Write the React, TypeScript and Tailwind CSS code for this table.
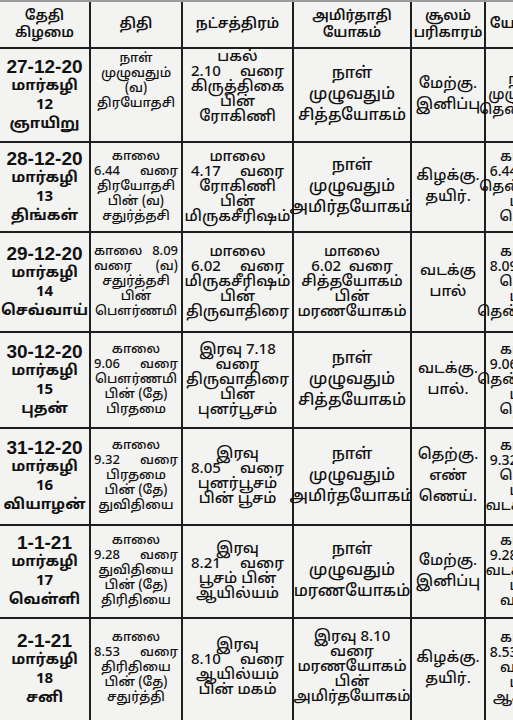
import React from "react";

const font = {
  fontFamily:
    '"Noto Sans Tamil", "Latha", "Lohit Tamil", "Noto Sans", "Liberation Sans", sans-serif',
};

const header: string[][] = [
  ["தேதி", "கிழமை"],
  ["திதி"],
  ["நட்சத்திரம்"],
  ["அமிர்தாதி", "யோகம்"],
  ["சூலம்", "பரிகாரம்"],
  ["யோகினி"],
];

const rows: string[][][] = [
  [
    ["27-12-20", "மார்கழி", "12", "ஞாயிறு"],
    ["நாள்", "முழுவதும்", "(வ)", "திரயோதசி"],
    ["பகல்", "2.10~வரை", "கிருத்திகை", "பின்", "ரோகிணி"],
    ["நாள்", "முழுவதும்", "சித்தயோகம்"],
    ["மேற்கு.", "இனிப்பு"],
    ["நாள்", "முழுவதும்", "தென்மேற்கு"],
  ],
  [
    ["28-12-20", "மார்கழி", "13", "திங்கள்"],
    ["காலை", "6.44~வரை", "திரயோதசி", "பின் (வ)", "சதுர்த்தசி"],
    ["மாலை", "4.17~வரை", "ரோகிணி", "பின்", "மிருகசீரிஷம்"],
    ["நாள்", "முழுவதும்", "அமிர்தயோகம்"],
    ["கிழக்கு.", "தயிர்."],
    ["காலை", "6.44 வரை", "தென்மேற்கு", "பின்", "தெற்கு"],
  ],
  [
    ["29-12-20", "மார்கழி", "14", "செவ்வாய்"],
    ["காலை~8.09", "வரை~(வ)", "சதுர்த்தசி", "பின்", "பௌர்ணமி"],
    ["மாலை", "6.02~வரை", "மிருகசீரிஷம்", "பின்", "திருவாதிரை"],
    ["மாலை", "6.02  வரை", "சித்தயோகம்", "பின்", "மரணயோகம்"],
    ["வடக்கு", "பால்"],
    ["காலை", "8.09 வரை", "தெற்கு", "பின்", "தென்கிழக்கு"],
  ],
  [
    ["30-12-20", "மார்கழி", "15", "புதன்"],
    ["காலை", "9.06~வரை", "பௌர்ணமி", "பின் (தே)", "பிரதமை"],
    ["இரவு 7.18", "வரை", "திருவாதிரை", "பின்", "புனர்பூசம்"],
    ["நாள்", "முழுவதும்", "சித்தயோகம்"],
    ["வடக்கு.", "பால்."],
    ["காலை", "9.06 வரை", "தென்கிழக்கு", "பின்", "தெற்கு"],
  ],
  [
    ["31-12-20", "மார்கழி", "16", "வியாழன்"],
    ["காலை", "9.32~வரை", "பிரதமை", "பின் (தே)", "துவிதியை"],
    ["இரவு", "8.05~வரை", "புனர்பூசம்", "பின் பூசம்"],
    ["நாள்", "முழுவதும்", "அமிர்தயோகம்"],
    ["தெற்கு.", "எண்", "ணெய்."],
    ["காலை", "9.32 வரை", "தெற்கு", "பின்", "வடகிழக்கு"],
  ],
  [
    ["1-1-21", "மார்கழி", "17", "வெள்ளி"],
    ["காலை", "9.28~வரை", "துவிதியை", "பின் (தே)", "திரிதியை"],
    ["இரவு", "8.21~வரை", "பூசம் பின்", "ஆயில்யம்"],
    ["நாள்", "முழுவதும்", "மரணயோகம்"],
    ["மேற்கு.", "இனிப்பு"],
    ["காலை", "9.28 வரை", "வடகிழக்கு", "பின்", "வடக்கு"],
  ],
  [
    ["2-1-21", "மார்கழி", "18", "சனி"],
    ["காலை", "8.53~வரை", "திரிதியை", "பின் (தே)", "சதுர்த்தி"],
    ["இரவு", "8.10~வரை", "ஆயில்யம்", "பின் மகம்"],
    ["இரவு 8.10", "வரை", "மரணயோகம்", "பின்", "அமிர்தயோகம்"],
    ["கிழக்கு.", "தயிர்."],
    ["காலை", "8.53 வரை", "வடக்கு", "பின்", "ஆகாயம்"],
  ],
];

function colClass(ci: number, n: number): string {
  switch (ci) {
    case 0:
      return "text-[15px] leading-[19px] font-bold";
    case 1:
      return "text-[13px] leading-[15px] px-[3px] font-medium";
    case 2:
      return "text-[15px] leading-[15px] px-[8px] font-medium";
    case 3:
      return n > 3
        ? "text-[15px] leading-[15px] px-[6px] font-medium"
        : "text-[16px] leading-[21px] px-[6px] font-medium";
    case 4:
      return "text-[15px] leading-[21px] font-medium";
    default:
      return "text-[14px] leading-[15px] font-medium";
  }
}

const rowH = [
  "h-[92px]",
  "h-[88px]",
  "h-[98px]",
  "h-[94px]",
  "h-[95px]",
  "h-[91px]",
  "h-[110px]",
];

const extra: Record<string, string> = {
  "0-1": "pb-[26px]",
  "0-2": "pb-[16px]",
  "6-0": "pb-[10px]",
  "6-1": "pb-[12px]",
  "6-2": "pb-[12px]",
  "6-3": "pb-[14px]",
  "6-4": "pb-[10px]",
  "6-5": "pb-[12px]",
};

function Line({ t, date }: { t: string; date?: boolean }) {
  if (date) {
    return (
      <div
        className="whitespace-nowrap text-[19px] leading-[20px] font-bold"
        style={{ fontFamily: '"Liberation Sans", Arial, sans-serif' }}
      >
        {t}
      </div>
    );
  }
  if (t.includes("~")) {
    const [a, b] = t.split("~");
    return (
      <div className="flex justify-between w-full">
        <span>{a}</span>
        <span>{b}</span>
      </div>
    );
  }
  return <div className="whitespace-pre">{t}</div>;
}

export default function App() {
  return (
    <div
      className="w-[513px] h-[720px] overflow-hidden bg-[#f3f3f1] text-[#111111]"
      style={font}
    >
      <div className="w-[566px] bg-[#9a9a9a] pt-[2px]">
        <div className="grid grid-cols-[89px_90px_109px_116px_72px_80px] gap-[2px] bg-[#1e1e1e]">
          {header.map((h, i) => (
            <div
              key={"h" + i}
              className="h-[45px] bg-[#f3f3f1] flex flex-col items-center justify-center text-[14px] leading-[17px] font-semibold"
            >
              {h.map((l, j) => (
                <div key={j} className="whitespace-nowrap">
                  {l}
                </div>
              ))}
            </div>
          ))}
          {rows.map((r, ri) =>
            r.map((c, ci) => (
              <div
                key={ri + "-" + ci}
                className={
                  "bg-[#f3f3f1] flex flex-col items-center justify-center text-center " +
                  rowH[ri] +
                  " " +
                  colClass(ci, c.length) +
                  " " +
                  (extra[ri + "-" + ci] || "")
                }
              >
                {c.map((l, j) => (
                  <Line key={j} t={l} date={ci === 0 && j === 0} />
                ))}
              </div>
            ))
          )}
        </div>
      </div>
    </div>
  );
}
